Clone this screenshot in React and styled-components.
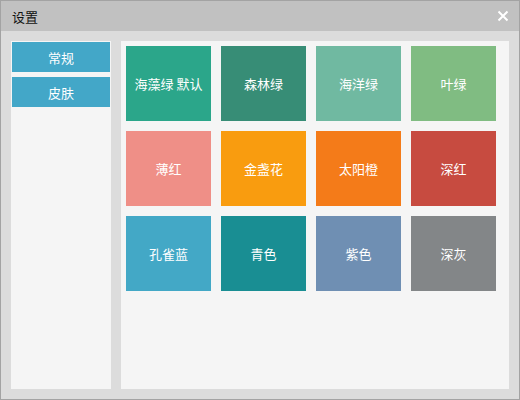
import React from 'react';
import styled, { createGlobalStyle } from 'styled-components';

const GlobalStyle = createGlobalStyle`
  html, body {
    margin: 0;
    padding: 0;
    background: #dcdcdc;
    font-family: "Microsoft YaHei", "Noto Sans CJK SC", "Noto Sans", sans-serif;
  }
`;

const Window = styled.div`
  width: 520px;
  height: 400px;
  box-sizing: border-box;
  border: 1px solid #a3a3a3;
  background: #dcdcdc;
  display: flex;
  flex-direction: column;
`;

const TitleBar = styled.div`
  height: 30px;
  flex: none;
  background: #c1c1c1;
  display: flex;
  align-items: center;
  justify-content: space-between;
  padding: 0 10px 0 11px;
  font-size: 13px;
  color: #111;
`;

const CloseButton = styled.button`
  border: none;
  background: none;
  padding: 0;
  width: 12px;
  height: 12px;
  display: flex;
  cursor: pointer;
`;

const Body = styled.div`
  flex: 1;
  display: flex;
  gap: 10px;
  padding: 10px;
`;

const Sidebar = styled.div`
  width: 100px;
  background: #f5f5f5;
  padding: 1px;
  box-sizing: border-box;
  display: flex;
  flex-direction: column;
  gap: 5px;
`;

const NavItem = styled.div`
  height: 30px;
  background: #43a7c8;
  color: #fff;
  font-size: 13px;
  display: flex;
  align-items: center;
  justify-content: center;
  cursor: pointer;
`;

const Content = styled.div`
  flex: 1;
  background: #f5f5f5;
  padding: 5px;
  display: grid;
  grid-template-columns: repeat(4, 85px);
  grid-auto-rows: 75px;
  gap: 10px;
  align-content: start;
`;

const Tile = styled.div`
  background: ${(p) => p.$color};
  color: #fff;
  font-size: 13px;
  display: flex;
  align-items: center;
  justify-content: center;
  cursor: pointer;
`;

const skins = [
  { name: '海藻绿 默认', color: '#2ba68a' },
  { name: '森林绿', color: '#378d76' },
  { name: '海洋绿', color: '#70b9a1' },
  { name: '叶绿', color: '#80bc82' },
  { name: '薄红', color: '#ef8f87' },
  { name: '金盏花', color: '#f99c0f' },
  { name: '太阳橙', color: '#f47b19' },
  { name: '深红', color: '#c74b40' },
  { name: '孔雀蓝', color: '#43a8c6' },
  { name: '青色', color: '#198e93' },
  { name: '紫色', color: '#6f8fb3' },
  { name: '深灰', color: '#838688' },
];

const App = () => {
  return (
    <>
      <GlobalStyle />
      <Window>
        <TitleBar>
          <span>设置</span>
          <CloseButton aria-label="关闭">
            <svg width="12" height="12" viewBox="0 0 12 12">
              <path d="M1.5 1.5 L10.5 10.5 M10.5 1.5 L1.5 10.5" stroke="#fff" strokeWidth="2" />
            </svg>
          </CloseButton>
        </TitleBar>
        <Body>
          <Sidebar>
            <NavItem>常规</NavItem>
            <NavItem>皮肤</NavItem>
          </Sidebar>
          <Content>
            {skins.map((s) => (
              <Tile key={s.name} $color={s.color}>{s.name}</Tile>
            ))}
          </Content>
        </Body>
      </Window>
    </>
  );
};

export default App;
